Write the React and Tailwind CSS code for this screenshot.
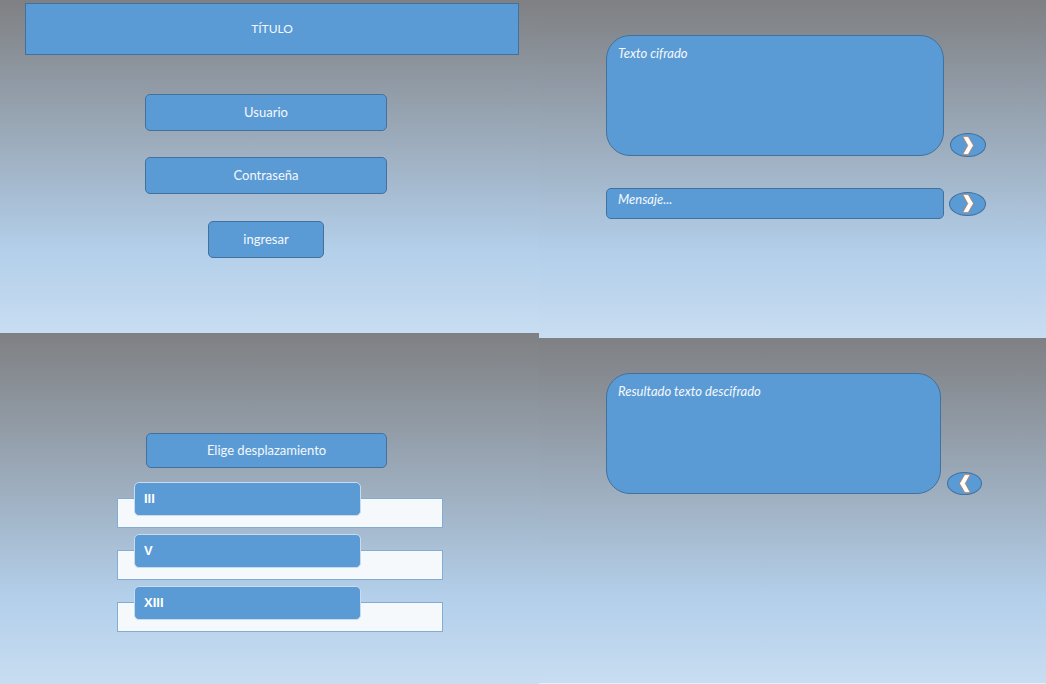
import React from 'react'

const panel = 'bg-linear-to-b from-[#7f8083] via-[#b3cfea] via-75% to-[#c8ddf1]'
const blue = 'bg-[#5b9bd5] border border-[#41719c] text-[#f4f8fc]'

const Chevron = ({ left }) => (
    <svg width="12" height="19" viewBox="0 0 10 16" className={left ? 'rotate-180' : ''}>
        <polygon points="0.6,0.5 5.2,0.5 9.6,8 5.2,15.5 0.6,15.5 4.8,8" fill="#ffffff" stroke="#c7733c" strokeWidth="0.6" strokeLinejoin="round" />
    </svg>
)

const RoundBtn = ({ left, className }) => (
    <div className={`${blue} rounded-[50%] flex items-center justify-center ${className}`}>
        <Chevron left={left} />
    </div>
)

const Shift = ({ label, top }) => (
    <div className={`flex flex-col ml-[117px] w-[326px] ${top ? 'mt-[14px]' : 'mt-[6px]'}`}>
        <div className="relative z-10 ml-[17px] w-[227px] h-[34px] rounded-[5px] bg-[#5b9bd5] border border-[#c9dcef] flex items-center pl-[9px] pb-[1px] text-white text-[13px] font-bold font-['Liberation_Sans',sans-serif]">
            {label}
        </div>
        <div className="mt-[-18px] h-[30px] bg-[#f5f9fc] border border-[#82acd2]" />
    </div>
)

export default function App() {
    return (
        <div className="w-[1046px] h-[684px] bg-[#808080] flex overflow-hidden font-['Lato','Open_Sans',sans-serif]">
            {/* left column */}
            <div className="w-[539px] flex flex-col">
                <div className={`${panel} h-[333px] flex flex-col`}>
                    <div className={`${blue} mt-[3px] ml-[25px] w-[494px] h-[52px] flex items-center justify-center text-[12px]`}>
                        TÍTULO
                    </div>
                    <div className={`${blue} mt-[39px] ml-[145px] w-[242px] h-[37px] rounded-[5px] flex items-center justify-center text-[13px]`}>
                        Usuario
                    </div>
                    <div className={`${blue} mt-[26px] ml-[145px] w-[242px] h-[37px] rounded-[5px] flex items-center justify-center text-[13px]`}>
                        Contraseña
                    </div>
                    <div className={`${blue} mt-[27px] ml-[208px] w-[116px] h-[37px] rounded-[5px] flex items-center justify-center text-[13px]`}>
                        ingresar
                    </div>
                </div>
                <div className={`${panel} h-[351px] flex flex-col`}>
                    <div className={`${blue} mt-[100px] ml-[146px] w-[241px] h-[35px] rounded-[5px] flex items-center justify-center text-[13px]`}>
                        Elige desplazamiento
                    </div>
                    <Shift label="III" top />
                    <Shift label="V" />
                    <Shift label="XIII" />
                </div>
            </div>

            {/* right column */}
            <div className="w-[507px] flex flex-col">
                <div className={`${panel} h-[338px] flex flex-col`}>
                    <div className="mt-[35px] flex items-end">
                        <div className={`${blue} ml-[67px] w-[338px] h-[121px] rounded-[24px] pt-[8px] pl-[11px] text-[13px] italic`}>
                            Texto cifrado
                        </div>
                        <RoundBtn className="ml-[6px] w-[36px] h-[24px] mb-[-1px]" />
                    </div>
                    <div className="mt-[32px] flex items-center">
                        <div className={`${blue} ml-[67px] w-[338px] h-[31px] rounded-[5px] pt-[1px] pl-[11px] text-[13px] italic`}>
                            Mensaje...
                        </div>
                        <RoundBtn className="ml-[5px] w-[37px] h-[24px]" />
                    </div>
                </div>
                <div className={`${panel} h-[345px] flex flex-col`}>
                    <div className="mt-[35px] flex items-end">
                        <div className={`${blue} ml-[67px] w-[335px] h-[121px] rounded-[24px] pt-[8px] pl-[11px] text-[13px] italic`}>
                            Resultado texto descifrado
                        </div>
                        <RoundBtn left className="ml-[6px] w-[35px] h-[23px] mb-[-1px]" />
                    </div>
                </div>
                <div className="h-[1px] bg-[#e9eff5]" />
            </div>
        </div>
    )
}
